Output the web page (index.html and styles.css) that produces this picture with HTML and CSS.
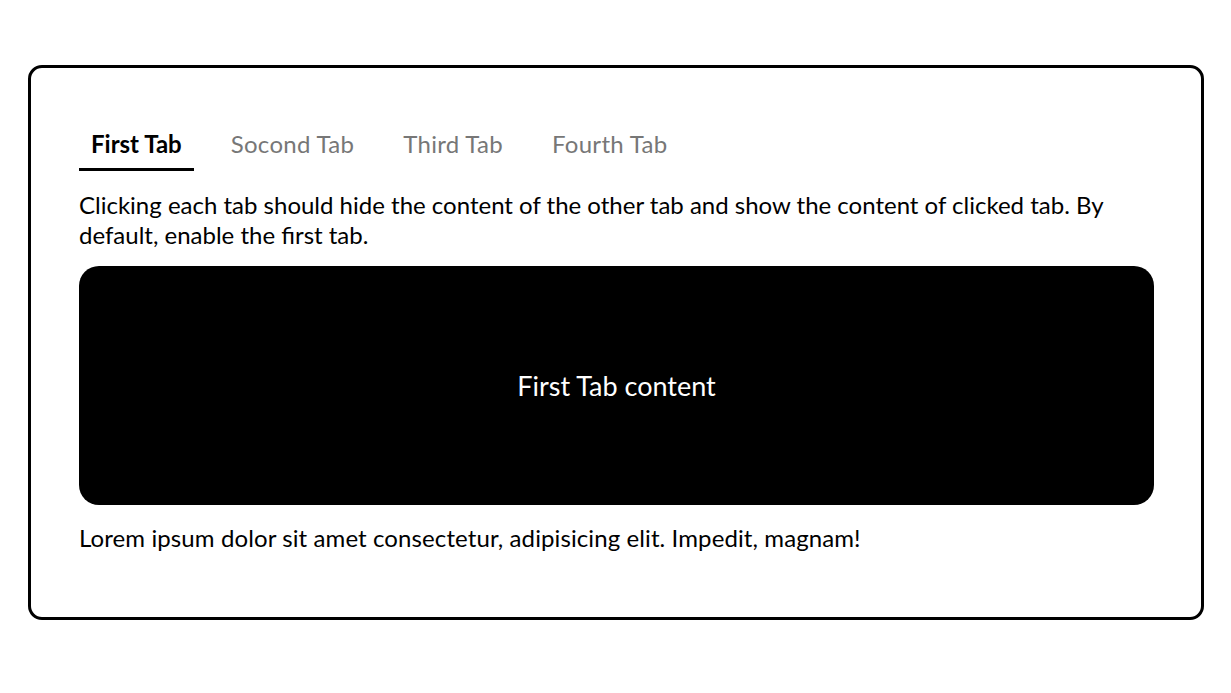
FILE: index.html
```html
<!DOCTYPE html>
<html lang="en">
<head>
<meta charset="utf-8">
<title>Tabs</title>
<link rel="stylesheet" href="styles.css">
</head>
<body>
<div class="card">
  <div class="tabs">
    <button class="tab active">First Tab</button>
    <button class="tab">Socond Tab</button>
    <button class="tab">Third Tab</button>
    <button class="tab">Fourth Tab</button>
  </div>
  <p class="desc">Clicking each tab should hide the content of the other tab and show the content of clicked tab. By default, enable the first tab.</p>
  <div class="panel">First Tab content</div>
  <p class="note">Lorem ipsum dolor sit amet consectetur, adipisicing elit. Impedit, magnam!</p>
</div>
</body>
</html>
```
FILE: styles.css
```css
* { box-sizing: border-box; }
body {
  margin: 0;
  background: #fff;
  font-family: "Lato", "Noto Sans", sans-serif;
  color: #000;
}
.card {
  margin: 65px 27px 0 28px;
  border: 3px solid #000;
  border-radius: 14px;
  padding: 53px 47px 64px 48px;
}
.tabs {
  display: flex;
  gap: 25px;
}
.tab {
  font-family: inherit;
  font-size: 24px;
  line-height: 30px;
  letter-spacing: 0.3px;
  background: none;
  border: none;
  border-bottom: 3px solid transparent;
  padding: 8px 12px 9px;
  color: #777;
  cursor: pointer;
}
.tab.active {
  color: #000;
  font-weight: 700;
  letter-spacing: 0;
  border-bottom-color: #000;
}
.desc {
  margin: 19px 0 16px;
  font-size: 24px;
  line-height: 30px;
}
.panel {
  height: 239px;
  background: #000;
  border-radius: 20px;
  color: #fff;
  font-size: 27px;
  display: flex;
  align-items: center;
  justify-content: center;
}
.note {
  margin: 18px 0 0;
  font-size: 24px;
  line-height: 30px;
  letter-spacing: 0.1px;
}
```
